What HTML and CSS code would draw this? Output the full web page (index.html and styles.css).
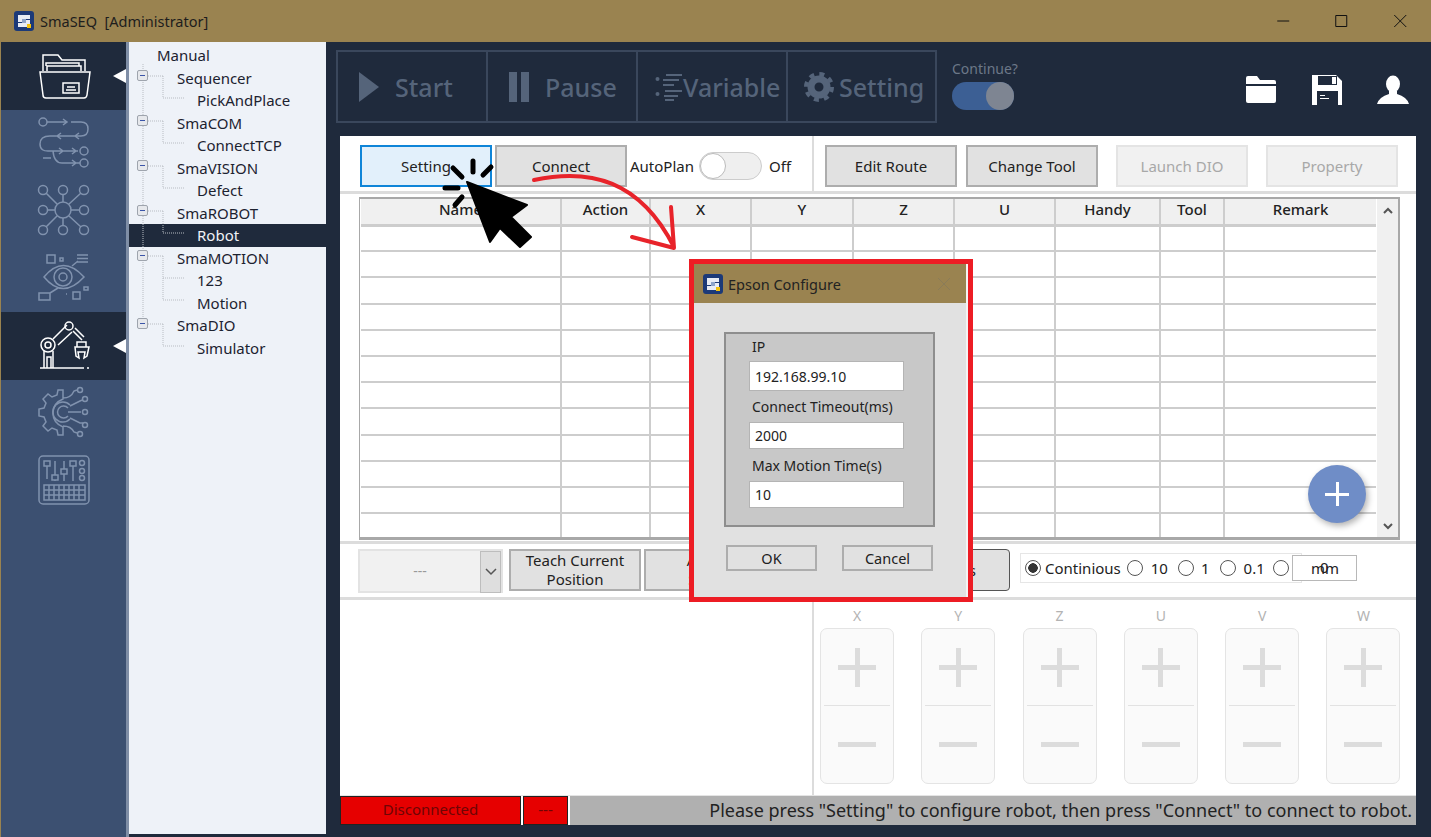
FILE: index.html
```html
<!DOCTYPE html>
<html lang="en">
<head>
    <meta charset="UTF-8">
    <title>SmaSEQ</title>
    <link rel="stylesheet" href="styles.css">
</head>
<body>
<div class="page">
    <header class="titlebar">
        <svg class="logo" viewBox="0 0 20 20"><rect width="20" height="20" rx="3" fill="#1c3a78"/><path d="M4 4h12v4H8v1h8v7H4v-4h8v-1H4z" fill="#e8edf5"/><path d="M8 8h4v4H8z" fill="#8da4c9"/><rect x="13" y="13" width="4" height="4" fill="#f4c20d"/></svg>
        <span class="app-name">SmaSEQ  [Administrator]</span>
        <div class="win-btns">
            <svg class="win-btn" viewBox="0 0 14 14"><path d="M1 7h12" stroke="#111" fill="none"/></svg>
            <svg class="win-btn" viewBox="0 0 14 14"><path d="M1.5 1.5h11v11h-11z" stroke="#111" fill="none"/></svg>
            <svg class="win-btn" viewBox="0 0 14 14"><path d="M1 1l12 12M13 1L1 13" stroke="#111" fill="none"/></svg>
        </div>
    </header>
    <div class="content">
        <nav class="sidebar">
            <div class="side-item on">
                <svg class="side-icon" viewBox="36 48 56 56"><path d="M43 71V55h15l4 5h23v11M47 71v-5h34v5M46 66v-3h33v3M40 72h50l-3 23q-.5 3-3 3H46q-3 0-3-3z"/><path d="M63 83h16v10H63zM67 87h8M66 90h10"/></svg>
                <i class="side-arrow"></i>
            </div>
            <div class="side-item">
                <svg class="side-icon" viewBox="36 115 56 56"><circle cx="43" cy="122" r="4"/><circle cx="84" cy="151" r="4"/><circle cx="84" cy="163" r="4"/><path d="M47 122h20M71 122h10q7 0 7 7t-7 7H50q-10 0-10 8t10 7h28M53 151q1 12 9 12h18M63 119l4 3-4 3M61 133l-4 3 4 3M79 133l-4 3 4 3M59 148l4 3-4 3M72 148l4 3-4 3M72 160l4 3-4 3M43 158h8"/></svg>
            </div>
            <div class="side-item">
                <svg class="side-icon" viewBox="36 183 56 56"><circle cx="63" cy="210" r="8"/><circle cx="43" cy="190" r="4.5"/><circle cx="63" cy="190" r="4.5"/><circle cx="84" cy="190" r="4.5"/><circle cx="43" cy="210" r="4.5"/><circle cx="84" cy="210" r="4.5"/><circle cx="43" cy="230" r="4.5"/><circle cx="63" cy="230" r="4.5"/><circle cx="84" cy="230" r="4.5"/><path d="M46 193l11 11M63 195v7M81 193l-12 11M48 210h7M71 210h8M46 227l11-11M63 218v7M81 227l-12-11"/></svg>
            </div>
            <div class="side-item">
                <svg class="side-icon" viewBox="36 250 56 56"><path d="M47 255h8v8h-8zM60 258h3v3h-3zM77 255h11M77 258.500h11M77 262h11M44 277q19-23 40 0q-21 23-40 0zM84 287h4v3h-4zM39 293h11v7H39zM50 293l8-5M66 294h1M73 292h7v7h-7zM72 266l6-5"/><circle cx="63" cy="277" r="9"/><circle cx="63" cy="277" r="4"/></svg>
            </div>
            <div class="side-item on">
                <svg class="side-icon" viewBox="36 318 56 56"><path d="M40 368h44M87 368h2M44 368v-17M53 368v-17M47 368v-11h4v11M53 339l14-14M58 345l14-13M73 331l9 9M75 328l9 9M77 342h9v5h-9zM75 347h14l-2 9-3 2 1-6h-7l1 6-3-2z"/><circle cx="48" cy="345" r="7"/><circle cx="48" cy="345" r="3"/><circle cx="69" cy="326" r="4"/></svg>
                <i class="side-arrow"></i>
            </div>
            <div class="side-item">
                <svg class="side-icon" viewBox="36 385 56 56"><path d="M63 390h-5l-1 5-5 2-4-3-5 5 3 4-2 5-5 1v7l5 1 2 5-3 4 5 5 4-3 5 2 1 5h5v-8q-10-4-10-14t10-14zM63 398q8 0 11-7l3-1M70 406l10-5q2-1 3-1M68 412h13M70 418l10 5h3M63 426q8 0 11 6l3 1"/><path d="M70 405a10 10 0 1 0 0 14M68 408a6 6 0 1 0 0 8"/><circle cx="80" cy="390" r="2.500"/><circle cx="85" cy="399" r="2.500"/><circle cx="85" cy="412" r="2.500"/><circle cx="85" cy="425" r="2.500"/><circle cx="80" cy="434" r="2.500"/></svg>
            </div>
            <div class="side-item">
                <svg class="side-icon" viewBox="36 453 56 56"><rect x="39" y="456" width="50" height="48" rx="4"/><path d="M47 466v13M55 461v14M55 480v1M64 461v8M64 474v7M73 466v15M47 461h0M44 461h6v5h-6zM52 475h6v5h-6zM61 469h6v5h-6zM70 461h6v5h-6zM44 485h41v15H44zM49 485v15M54 485v15M59 485v15M64 485v15M69 485v15M74 485v15M79 485v15M44 490h41M44 495h41"/><circle cx="82" cy="463" r="2.500"/><circle cx="82" cy="471" r="2.500"/><circle cx="82" cy="478" r="2.500"/></svg>
            </div>
        </nav>
        <aside class="tree">
            <svg class="tree-lines" viewBox="0 0 197 320">
                <path class="dots" d="M14 22v262M34 34h-15M34 34v22h21M34 79h-15M34 79v22h21M34 124h-15M34 124v22h21M34 169h-15M34 169v22h21M34 214h-15M34 214v44h21M34 236h21M34 282h-15M34 282v22h21"/>
                <g class="box"><rect x="8.500" y="28.500" width="10" height="10" rx="1.500"/><rect x="8.500" y="73.500" width="10" height="10" rx="1.500"/><rect x="8.500" y="118.500" width="10" height="10" rx="1.500"/><rect x="8.500" y="163.500" width="10" height="10" rx="1.500"/><rect x="8.500" y="208.500" width="10" height="10" rx="1.500"/><rect x="8.500" y="276.500" width="10" height="10" rx="1.500"/></g>
                <path class="minus" d="M11 33.500h5M11 78.500h5M11 123.500h5M11 168.500h5M11 213.500h5M11 281.500h5"/>
            </svg>
            <ul class="tree-list">
                <li class="lv0">Manual</li>
                <li class="lv1">Sequencer</li>
                <li class="lv2">PickAndPlace</li>
                <li class="lv1">SmaCOM</li>
                <li class="lv2">ConnectTCP</li>
                <li class="lv1">SmaVISION</li>
                <li class="lv2">Defect</li>
                <li class="lv1">SmaROBOT</li>
                <li class="lv2 sel">Robot</li>
                <li class="lv1">SmaMOTION</li>
                <li class="lv2">123</li>
                <li class="lv2">Motion</li>
                <li class="lv1">SmaDIO</li>
                <li class="lv2">Simulator</li>
            </ul>
        </aside>
        <main class="main">
            <div class="toolbar">
                <div class="tools">
                    <div class="tool">
                        <svg class="tool-icon" width="22" height="32" viewBox="0 0 22 32"><path d="M1 1l20 15L1 31z"/></svg>
                        <span class="tool-start">Start</span>
                    </div>
                    <div class="tool">
                        <svg class="tool-icon" width="22" height="32" viewBox="0 0 22 32"><path d="M1 1h8v30H1zM13 1h8v30h-8z"/></svg>
                        <span class="tool-pause">Pause</span>
                    </div>
                    <div class="tool tool-var">
                        <svg class="tool-icon" width="28" height="30" viewBox="0 0 28 30"><circle cx="2.500" cy="7" r="2"/><circle cx="2.500" cy="22" r="2"/><path d="M11 3h16M8 8h16M8 13h11M10 19h17M9 24h14M10 28h9" stroke="#55647a" stroke-width="1.800"/></svg>
                        <span>Variable</span>
                    </div>
                    <div class="tool">
                        <svg class="tool-icon" width="30" height="30" viewBox="0 0 30 30"><circle cx="15" cy="15" r="8" fill="none" stroke="#55647a" stroke-width="7"/><circle cx="15" cy="15" r="13" fill="none" stroke="#55647a" stroke-width="4" stroke-dasharray="5 5.200"/></svg>
                        <span>Setting</span>
                    </div>
                </div>
                <div class="continue">
                    <span>Continue?</span>
                    <div class="cont-toggle"><i></i></div>
                </div>
                <div class="top-icons">
                    <svg width="32" height="30" viewBox="0 0 32 30"><path d="M1 6V3q0-2 2-2h9l3 4h14q2 0 2 2v2H1z" fill="#fff"/><path d="M1 11h30v15q0 2-2 2H3q-2 0-2-2z" fill="#fff"/></svg>
                    <svg width="32" height="32" viewBox="0 0 32 32"><path d="M1 1h24l6 6v24H1z" fill="#fff"/><path d="M7 2h19v9H7zM6 17h21v14H6z" fill="#1f2a3c"/><path d="M21 3h4v7h-4zM9 21h5v1H9zM9 24h9v1H9z" fill="#fff"/></svg>
                    <svg width="32" height="30" viewBox="0 0 32 30"><ellipse cx="16" cy="9" rx="7" ry="8.500" fill="#fff"/><path d="M12 16h8v3q10 3 12 10H0q2-7 12-10z" fill="#fff"/></svg>
                </div>
            </div>
            <section class="panel">
                <div class="actions">
                    <div class="actions-left">
                        <button class="btn btn-hot">Setting</button>
                        <button class="btn">Connect</button>
                        <span class="auto-label">AutoPlan</span>
                        <div class="auto-toggle"><i></i></div>
                        <span class="auto-off">Off</span>
                    </div>
                    <div class="actions-right">
                        <button class="btn">Edit Route</button>
                        <button class="btn">Change Tool</button>
                        <button class="btn btn-off btn-dio">Launch DIO</button>
                        <button class="btn btn-off btn-prop">Property</button>
                    </div>
                </div>
                <div class="table-area">
                    <div class="table-box">
                        <table class="route">
                            <colgroup><col class="c-name"><col class="c-action"><col class="c-x"><col class="c-y"><col class="c-x"><col class="c-x"><col class="c-handy"><col class="c-tool"><col class="c-remark"></colgroup>
                            <thead><tr><th>Name</th><th>Action</th><th>X</th><th>Y</th><th>Z</th><th>U</th><th>Handy</th><th>Tool</th><th>Remark</th></tr></thead>
                            <tbody>
                                <tr><td></td><td></td><td></td><td></td><td></td><td></td><td></td><td></td><td></td></tr>
                                <tr><td></td><td></td><td></td><td></td><td></td><td></td><td></td><td></td><td></td></tr>
                                <tr><td></td><td></td><td></td><td></td><td></td><td></td><td></td><td></td><td></td></tr>
                                <tr><td></td><td></td><td></td><td></td><td></td><td></td><td></td><td></td><td></td></tr>
                                <tr><td></td><td></td><td></td><td></td><td></td><td></td><td></td><td></td><td></td></tr>
                                <tr><td></td><td></td><td></td><td></td><td></td><td></td><td></td><td></td><td></td></tr>
                                <tr><td></td><td></td><td></td><td></td><td></td><td></td><td></td><td></td><td></td></tr>
                                <tr><td></td><td></td><td></td><td></td><td></td><td></td><td></td><td></td><td></td></tr>
                                <tr><td></td><td></td><td></td><td></td><td></td><td></td><td></td><td></td><td></td></tr>
                                <tr><td></td><td></td><td></td><td></td><td></td><td></td><td></td><td></td><td></td></tr>
                                <tr><td></td><td></td><td></td><td></td><td></td><td></td><td></td><td></td><td></td></tr>
                                <tr class="last"><td></td><td></td><td></td><td></td><td></td><td></td><td></td><td></td><td></td></tr>
                            </tbody>
                        </table>
                        <div class="scroll">
                            <svg width="12" height="8" viewBox="0 0 12 8"><path d="M2 6l4-4 4 4" fill="none" stroke="#555" stroke-width="2"/></svg>
                            <svg width="12" height="8" viewBox="0 0 12 8"><path d="M2 2l4 4 4-4" fill="none" stroke="#555" stroke-width="2"/></svg>
                        </div>
                    </div>
                </div>
                <div class="teach">
                    <div class="combo">
                        <span class="combo-val">---</span>
                        <span class="combo-btn"><svg width="12" height="8" viewBox="0 0 12 8"><path d="M1 1l5 5 5-5" fill="none" stroke="#555" stroke-width="1.500"/></svg></span>
                    </div>
                    <button class="btn btn-teach">Teach Current<br>Position</button>
                    <button class="btn btn-teach">Add to<br>Speed</button>
                    <button class="btn btn-teach btn-focus">Positions</button>
                    <div class="steps">
                        <i class="radio on"></i><span class="step-cont">Continious</span>
                        <i class="radio"></i><span class="step-10">10</span>
                        <i class="radio"></i><span class="step-1">1</span>
                        <i class="radio"></i><span class="step-01">0.1</span>
                        <i class="radio"></i>
                        <span class="step-val">0</span>
                    </div>
                    <span class="unit">mm</span>
                </div>
                <div class="jog-area">
                    <div class="jog-left"></div>
                    <div class="jogs">
                        <div class="jog"><span>X</span><div class="jog-box"><div class="jog-half"><i class="plus"></i></div><div class="jog-half"><i class="minus"></i></div></div></div>
                        <div class="jog"><span>Y</span><div class="jog-box"><div class="jog-half"><i class="plus"></i></div><div class="jog-half"><i class="minus"></i></div></div></div>
                        <div class="jog"><span>Z</span><div class="jog-box"><div class="jog-half"><i class="plus"></i></div><div class="jog-half"><i class="minus"></i></div></div></div>
                        <div class="jog"><span>U</span><div class="jog-box"><div class="jog-half"><i class="plus"></i></div><div class="jog-half"><i class="minus"></i></div></div></div>
                        <div class="jog"><span>V</span><div class="jog-box"><div class="jog-half"><i class="plus"></i></div><div class="jog-half"><i class="minus"></i></div></div></div>
                        <div class="jog"><span>W</span><div class="jog-box"><div class="jog-half"><i class="plus"></i></div><div class="jog-half"><i class="minus"></i></div></div></div>
                    </div>
                </div>
                <footer class="status">
                    <div class="st-red st-conn">Disconnected</div>
                    <div class="st-red st-dash">---</div>
                    <div class="st-msg">Please press "Setting" to configure robot, then press "Connect" to connect to robot.</div>
                </footer>
            </section>
        </main>
    </div>

    <!-- floating add button -->
    <div class="fab"></div>

    <!-- epson dialog -->
    <div class="dialog">
        <div class="dlg-title">
            <svg class="dlg-logo" viewBox="0 0 20 20"><rect width="20" height="20" rx="3" fill="#1c3a78"/><path d="M4 4h12v4H8v1h8v7H4v-4h8v-1H4z" fill="#e8edf5"/><path d="M8 8h4v4H8z" fill="#8da4c9"/><rect x="13" y="13" width="4" height="4" fill="#f4c20d"/></svg>
            <span>Epson Configure</span>
            <svg class="dlg-x" viewBox="0 0 14 14"><path d="M1 1l12 12M13 1L1 13" stroke="#8b7c58" fill="none"/></svg>
        </div>
        <div class="dlg-body">
            <div class="group">
                <label class="lab-ip">IP</label>
                <input class="field f-ip" value="192.168.99.10">
                <label class="lab-time">Connect Timeout(ms)</label>
                <input class="field" value="2000">
                <label class="lab-max">Max Motion Time(s)</label>
                <input class="field" value="10">
            </div>
            <div class="dlg-btns">
                <button class="dlg-btn">OK</button>
                <button class="dlg-btn">Cancel</button>
            </div>
        </div>
    </div>

    <!-- annotation drawn on top of the screenshot -->
    <svg class="notes" viewBox="0 0 1431 837">
        <path class="red" d="M534 180C590 168 640 180 674 247M671 207l3 41-42-11"/>
        <path class="cursor" d="M467 182l60 23-16 12 20 20-11 10-20-19-10 14z"/>
        <path class="spark" d="M473 161v11M491 167l-8 8M453 168l9 9M445 188h13M462 197l-7 8"/>
    </svg>
</div>
</body>
</html>
```

FILE: styles.css
```css
*{
    box-sizing: border-box;
}
html,body{
    margin: 0;
    padding: 0;
}
body{
    font-family: "Noto Sans", "Noto Sans CJK TC", sans-serif;
    font-size: 15px;
    color: #222;
    overflow: hidden;
}
button{
    font-family: inherit;
    font-size: 15px;
    color: #222;
    padding: 0;
}
.page{
    position: relative;
    width: 1431px;
    height: 837px;
    background: #1f2a3c;
    overflow: hidden;
    display: flex;
    flex-direction: column;
}

/* title bar */
.titlebar{
    height: 42px;
    flex: none;
    background: #9a8350;
    display: flex;
    align-items: center;
    padding-left: 14px;
    padding-right: 2px;
}
.logo{
    width: 20px;
    height: 20px;
}
.app-name{
    margin-left: 6px;
    font-size: 14.5px;
    white-space: pre;
    color: #1d1d1d;
}
.win-btns{
    margin-left: auto;
    display: flex;
}
.win-btn{
    width: 58.500px;
    height: 14px;
}

.content{
    flex: 1;
    display: flex;
    min-height: 0;
}

/* left icon bar */
.sidebar{
    width: 129px;
    flex: none;
    background: #3c5071;
    border-left: 1px solid #9a8350;
    border-right: 3px solid #7f8ea6;
}
.side-item{
    height: 67.500px;
    position: relative;
    display: flex;
    align-items: center;
    justify-content: center;
}
.side-item.on{
    background: #1f2a3c;
}
.side-icon{
    width: 56px;
    height: 56px;
    fill: none;
    stroke: #8092ae;
    stroke-width: 1.500;
}
.on .side-icon{
    stroke: #fff;
}
.side-arrow{
    position: absolute;
    right: 0;
    top: 27px;
    border-top: 7px solid transparent;
    border-bottom: 7px solid transparent;
    border-right: 13px solid #fff;
}

/* tree */
.tree{
    width: 197px;
    flex: none;
    background: #eef2f8;
    position: relative;
    margin-bottom: 3px;
    padding-top: 2px;
}
.tree-list{
    list-style: none;
    margin: 0;
    padding: 0;
}
.tree-list li{
    height: 22.500px;
    line-height: 22px;
    font-size: 15px;
    color: #1c2230;
    white-space: nowrap;
}
.lv0{
    padding-left: 28px;
}
.lv1{
    padding-left: 48px;
}
.lv2{
    padding-left: 68px;
}
.tree-list li.sel{
    background: #1f2a3c;
    color: #f0f2f6;
}
.tree-lines{
    position: absolute;
    left: 0;
    top: 0;
    width: 197px;
    height: 320px;
    z-index: 1;
}
.tree-lines .dots{
    fill: none;
    stroke: #b8bcc2;
    stroke-dasharray: 1 1;
}
.tree-lines .box rect{
    fill: #e6e8ec;
    stroke: #9ea4ad;
}
.tree-lines .minus{
    stroke: #3b55a8;
    fill: none;
}

/* main area */
.main{
    flex: 1;
    min-width: 0;
    padding: 8px 15px 12px 14px;
    display: flex;
    flex-direction: column;
}
.toolbar{
    height: 73px;
    margin-left: -4px;
    margin-bottom: 13px;
    flex: none;
    display: flex;
    align-items: flex-start;
}
.tools{
    display: flex;
    height: 73px;
    border: 2px solid #3a475c;
}
.tool{
    width: 150px;
    display: flex;
    align-items: center;
    gap: 15px;
    padding-left: 20px;
    border-right: 2px solid #3a475c;
    color: #55647a;
    font-size: 25px;
    font-weight: 500;
}
.tool:last-child{
    width: 147px;
    border-right: 0;
    gap: 5px;
    padding-left: 16px;
}
.tool-var{
    gap: 0;
    padding-left: 17px;
}
.tool-icon{
    fill: #55647a;
    flex: none;
}
.continue{
    margin-left: 15px;
    margin-top: 9px;
    color: #6c7888;
    font-size: 14px;
    line-height: 20px;
}
.cont-toggle{
    width: 62px;
    height: 28px;
    margin-top: 3px;
    border-radius: 14px;
    background: #3c5f94;
    position: relative;
}
.cont-toggle i{
    position: absolute;
    right: 0;
    top: 0;
    width: 28px;
    height: 28px;
    border-radius: 50%;
    background: #7e8592;
}
.top-icons{
    margin-left: auto;
    margin-top: 24px;
    margin-right: 7px;
    display: flex;
    align-items: center;
    gap: 34px;
}

/* white panel */
.panel{
    flex: 1;
    min-height: 0;
    background: #fff;
    display: flex;
    flex-direction: column;
}
.actions{
    height: 58px;
    flex: none;
    border-bottom: 3px solid #dcdcdc;
    display: flex;
}
.actions-left{
    width: 474px;
    border-right: 2px solid #dcdcdc;
    padding: 9px 0 0 20px;
    display: flex;
    align-items: flex-start;
}
.actions-right{
    flex: 1;
    padding: 9px 0 0 11px;
    display: flex;
    align-items: flex-start;
}
.btn{
    width: 132px;
    height: 42px;
    background: #e1e1e1;
    border: 2px solid #adadad;
    line-height: 19px;
}
.btn-hot{
    background: #e2f0fb;
    border-color: #0f85d8;
}
.actions-left .btn{
    margin-right: 3px;
}
.actions-right .btn{
    margin-right: 9px;
}
.actions-right .btn-dio{
    margin-left: 9px;
    margin-right: 18px;
}
.btn-off{
    background: #f1f1f1;
    border-color: #e4e4e4;
    color: #a8a8a8;
}
.auto-label{
    line-height: 42px;
}
.auto-toggle{
    width: 63px;
    height: 28px;
    margin: 7px 7px 0 5px;
    border: 1px solid #ccc;
    border-radius: 14px;
    background: #efefef;
    position: relative;
}
.auto-toggle i{
    position: absolute;
    left: 0;
    top: 0;
    width: 26px;
    height: 26px;
    border-radius: 50%;
    background: #fff;
    border: 1px solid #bbb;
}
.auto-off{
    line-height: 42px;
}

/* route table */
.table-area{
    height: 350px;
    flex: none;
    border-bottom: 3px solid #dcdcdc;
    padding: 3px 0 0 19px;
}
.table-box{
    width: 1041px;
    height: 343px;
    border: 1px solid #a8a8a8;
    border-width: 2px 2px 3px 1px;
    display: flex;
    overflow: hidden;
}
.route{
    width: 1015px;
    flex: none;
    table-layout: fixed;
    border-collapse: collapse;
    margin-left: 1px;
    align-self: flex-start;
}
.c-name{ width: 200px; }
.c-action{ width: 89px; }
.c-x{ width: 101px; }
.c-y{ width: 102px; }
.c-handy{ width: 105px; }
.c-tool{ width: 64px; }
.c-remark{ width: 152px; }
.route th{
    height: 26px;
    padding: 0 0 4px;
    background: #f0f0f0;
    font-size: 15px;
    font-weight: 500;
    line-height: 20px;
    border-right: 2px solid #cdcdcd;
    border-bottom: 3px solid #cdcdcd;
}
.route td{
    height: 26.200px;
    padding: 0;
    border-right: 2px solid #cdcdcd;
    border-bottom: 2px solid #cdcdcd;
}
.route th:last-child,.route td:last-child{
    border-right: 0;
}
.route .last td{
    border-bottom: 0;
}
.scroll{
    width: 22px;
    margin-left: 1px;
    background: #f0f0f0;
    display: flex;
    flex-direction: column;
    align-items: center;
    justify-content: space-between;
    padding: 8px 0 7px;
}

/* teach row */
.teach{
    height: 56px;
    flex: none;
    border-bottom: 3px solid #dcdcdc;
    padding: 5px 0 0 18px;
    display: flex;
    align-items: flex-start;
}
.combo{
    width: 145px;
    height: 44px;
    border: 2px solid #e3e3e3;
    background: #f1f1f1;
    display: flex;
    margin-right: 6px;
}
.combo-val{
    flex: 1;
    text-align: center;
    line-height: 40px;
    color: #999;
    font-size: 14px;
}
.combo-btn{
    width: 21px;
    height: 42px;
    background: #dedede;
    border: 1px solid #bdbdbd;
    display: flex;
    align-items: center;
    justify-content: center;
}
.btn-teach{
    margin-right: 3px;
}
.btn-focus{
    margin-left: 99px;
    margin-right: 10px;
    border: 1px solid #555;
    border-radius: 4px;
    padding-left: 0;
}
.steps{
    width: 282px;
    height: 30px;
    margin-top: 4px;
    border: 1px solid #e6e6e6;
    display: flex;
    align-items: center;
    padding-left: 4px;
    font-size: 15px;
}
.radio{
    width: 16px;
    height: 16px;
    border: 1px solid #555;
    border-radius: 50%;
    flex: none;
    background: #fff;
}
.radio.on{
    background: radial-gradient(circle, #333 0 4.500px, #fff 5px);
}
.step-cont{
    margin: 0 6px 0 4px;
}
.step-10{
    margin: 0 10px 0 8px;
}
.step-1{
    margin: 0 10px 0 7px;
}
.step-01{
    margin: 0 8px 0 8px;
}
.step-val{
    width: 65px;
    height: 26px;
    margin-left: 3px;
    border: 1px solid #b8b8b8;
    background: #fff;
    text-align: center;
    line-height: 22px;
    flex: none;
}
.unit{
    margin-left: 49px;
    line-height: 38px;
    margin-left: 9px;
    position: static;
}

/* jog buttons */
.jog-area{
    height: 195px;
    flex: none;
    display: flex;
}
.jog-left{
    width: 474px;
    border-right: 2px solid #dcdcdc;
}
.jogs{
    display: flex;
    gap: 27.300px;
    padding-left: 6px;
}
.jog{
    width: 74px;
    display: flex;
    flex-direction: column;
    align-items: center;
}
.jog span{
    height: 28px;
    line-height: 31px;
    color: #b3b3b3;
    font-size: 14px;
}
.jog-box{
    width: 74px;
    height: 156px;
    border: 1px solid #e4e4e4;
    border-radius: 7px;
    background: #fafafa;
    padding: 0 3px;
}
.jog-half{
    height: 77px;
    display: flex;
    align-items: center;
    justify-content: center;
}
.jog-half:first-child{
    border-bottom: 1px solid #e2e2e2;
}
.plus{
    width: 38px;
    height: 39px;
    background: linear-gradient(#dcdcdc,#dcdcdc) center/100% 5px no-repeat, linear-gradient(#dcdcdc,#dcdcdc) center/5px 100% no-repeat;
}
.minus{
    width: 38px;
    height: 5px;
    background: #dcdcdc;
}

/* status bar */
.status{
    height: 30px;
    flex: none;
    display: flex;
    gap: 2px;
    border-top: 1px solid #e4e4e4;
}
.st-red{
    background: #e60000;
    border: 1px solid #222;
    color: #6d0505;
    text-align: center;
    font-size: 15px;
    line-height: 24px;
}
.st-conn{
    width: 181px;
}
.st-dash{
    width: 45px;
}
.st-msg{
    flex: 1;
    background: #b0b0b0;
    text-align: right;
    padding-right: 4px;
    font-size: 18px;
    line-height: 28px;
    white-space: nowrap;
    color: #222;
}

/* add button */
.fab{
    position: absolute;
    left: 1308px;
    top: 465px;
    width: 58px;
    height: 58px;
    border-radius: 50%;
    background: linear-gradient(#fff,#fff) center/24px 3px no-repeat, linear-gradient(#fff,#fff) center/3px 24px no-repeat, #6f8dc7;
    box-shadow: 2px 3px 6px rgba(0,0,0,.3);
}

/* dialog */
.dialog{
    position: absolute;
    left: 689px;
    top: 259px;
    width: 284px;
    height: 343px;
    border: 5px solid #ed1c24;
    background: #f4f4f4;
    display: flex;
    flex-direction: column;
}
.dlg-title{
    height: 39px;
    margin-right: 2px;
    background: #9a8350;
    display: flex;
    align-items: center;
    padding-left: 9px;
    font-size: 14.500px;
    flex: none;
}
.dlg-logo{
    width: 20px;
    height: 20px;
    margin-right: 5px;
}
.dlg-x{
    width: 14px;
    height: 14px;
    margin-left: auto;
    margin-right: 15px;
}
.dlg-body{
    flex: 1;
    margin-right: 2px;
    background: #e1e1e1;
    padding: 29px 0 0 30px;
}
.group{
    width: 211px;
    height: 195px;
    background: #c8c8c8;
    border: 2px solid #8e8e8e;
    padding: 0 0 0 23px;
    display: flex;
    flex-direction: column;
    align-items: flex-start;
}
.group label{
    font-size: 14px;
    line-height: 20px;
    padding-left: 3px;
}
.lab-ip{
    margin-top: 3px;
    margin-bottom: 4px;
}
.lab-time{
    margin-top: 6px;
    margin-bottom: 5px;
}
.lab-max{
    margin-top: 7px;
    margin-bottom: 5px;
}
.field{
    width: 155px;
    height: 27px;
    border: 1px solid #b4b4b4;
    background: #fff;
    font-family: inherit;
    font-size: 14px;
    color: #222;
    padding: 0 5px;
    outline: 0;
}
.f-ip{
    height: 30px;
}
.dlg-btns{
    display: flex;
    gap: 25px;
    margin: 18px 0 0 2px;
}
.dlg-btn{
    width: 91px;
    height: 26px;
    background: #e1e1e1;
    border: 2px solid #adadad;
    font-size: 14.500px;
    line-height: 20px;
}

/* overlay with arrow and cursor */
.notes{
    position: absolute;
    left: 0;
    top: 0;
    width: 1431px;
    height: 837px;
    pointer-events: none;
}
.notes .red{
    fill: none;
    stroke: #e8232a;
    stroke-width: 4;
    stroke-linecap: round;
    stroke-linejoin: round;
}
.notes .cursor{
    fill: #000;
    stroke: #000;
    stroke-width: 2;
    stroke-linejoin: round;
}
.notes .spark{
    fill: none;
    stroke: #000;
    stroke-width: 5;
    stroke-linecap: round;
}
```
